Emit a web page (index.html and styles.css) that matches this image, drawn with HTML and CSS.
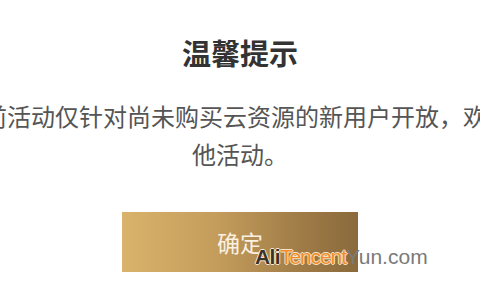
FILE: index.html
```html
<!DOCTYPE html>
<html lang="zh-CN">
<head>
<meta charset="utf-8">
<link rel="stylesheet" href="styles.css">
</head>
<body>
<div class="dialog">
  <h1 class="title">温馨提示</h1>
  <div class="msg">
    <p class="line line-first">当前活动仅针对尚未购买云资源的新用户开放，欢迎参与其</p>
    <p class="line">他活动。</p>
  </div>
  <button class="ok">确定</button>
</div>
<div class="watermark"><span class="wm-ali">Ali</span><span class="wm-tencent">Tencent</span><span class="wm-yun">Yun.com</span></div>
</body>
</html>
```
FILE: styles.css
```css
html, body {
  margin: 0;
  padding: 0;
  background: #ffffff;
}
body {
  width: 480px;
  height: 300px;
  overflow: hidden;
  position: relative;
  font-family: "Noto Sans CJK SC", "Noto Sans", sans-serif;
}
.dialog {
  display: flex;
  flex-direction: column;
  align-items: center;
  padding-top: 38px;
}
.title {
  margin: 0;
  font-size: 29px;
  line-height: 29px;
  font-weight: 700;
  color: #333333;
  white-space: nowrap;
}
.msg {
  margin-top: 30px;
  display: flex;
  flex-direction: column;
  align-items: center;
  width: 480px;
}
.line {
  margin: 0;
  font-size: 24px;
  line-height: 38px;
  color: #555555;
  white-space: nowrap;
}
.line-first {
  margin-left: 62px;
}
.ok {
  margin-top: 39px;
  width: 236px;
  height: 60px;
  border: none;
  border-radius: 0;
  padding: 0;
  background: linear-gradient(90deg, #d9b26b 0%, #c49d5c 40%, #a07c47 75%, #8a6a3c 100%);
  color: #fbf0e2;
  font-family: "Noto Sans CJK SC", sans-serif;
  font-size: 23px;
  line-height: 60px;
}
.watermark {
  position: absolute;
  left: 255px;
  top: 245px;
  font-family: "Liberation Sans", Arial, sans-serif;
  font-size: 21px;
  line-height: 24px;
  white-space: nowrap;
}
.wm-ali {
  font-weight: 700;
  color: #3a3328;
  letter-spacing: -0.6px;
  text-shadow: 1px 0 0 #f3e6d2, -1px 0 0 #f3e6d2, 0 1px 0 #f3e6d2, 0 -1px 0 #f3e6d2;
}
.wm-tencent {
  color: #f08d2a;
  letter-spacing: -1.1px;
  text-shadow: 1px 0 0 #f6e2c6, -1px 0 0 #f6e2c6, 0 1px 0 #f6e2c6, 0 -1px 0 #f6e2c6;
}
.wm-yun {
  color: #7a7a7a;
}
```
